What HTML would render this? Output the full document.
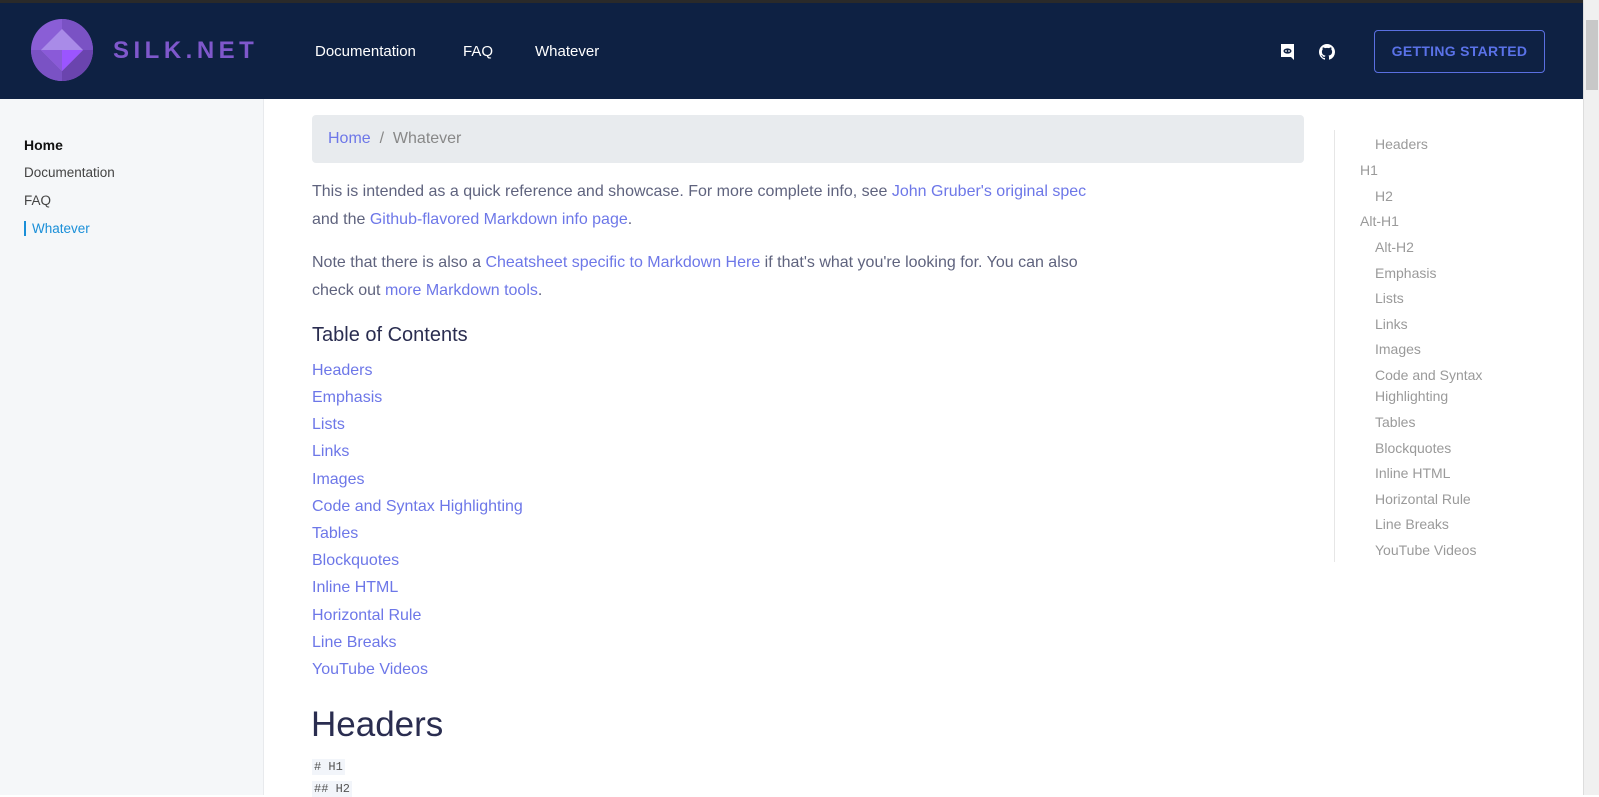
<!DOCTYPE html>
<html><head><style>
*{box-sizing:border-box;margin:0;padding:0}
body{width:1599px;height:795px;overflow:hidden;font-family:"Liberation Sans",sans-serif;background:#fff;position:relative;color:#4a4a68}
.top{position:absolute;left:0;top:0;width:1599px;height:3px;background:#2a2a2a}
.hdr{position:absolute;left:0;top:3px;width:1583px;height:96px;background:#0e2143}
.sb{position:absolute;right:0;top:0;width:16px;height:795px;background:#f0f0f0;border-left:1px solid #ddd}
.sb .th{position:absolute;left:2px;top:20px;width:12px;height:70px;background:#c8c8c8}
.a{position:absolute;white-space:nowrap}
.nav{color:#fff;font-size:15px;top:43px}
.btn{position:absolute;left:1374px;top:30px;width:171px;height:43px;border:1px solid #5a6fe0;border-radius:4px;color:#5a72e8;font-size:14px;font-weight:bold;text-align:center;line-height:41px;letter-spacing:.3px}
.side{position:absolute;left:0;top:99px;width:264px;height:696px;background:#f5f7f9;border-right:1px solid #e8eaed}
.side div{position:absolute;left:24px;font-size:13.5px;color:#444}
.bc{position:absolute;left:312px;top:115px;width:992px;height:48px;background:#e8ebee;border-radius:4px;font-size:16px;line-height:48px;padding-left:16px;color:#888}
.p{left:312px;font-size:16px;color:#5f637e}
a{color:#6d77e8;text-decoration:none}
.toc{left:312px;font-size:16px;color:#6d77e8}
.r{font-size:14px;color:#9a9a9a}
.code{position:absolute;left:312px;font-family:"Liberation Mono",monospace;font-size:12px;background:#f2f5fa;color:#555;padding:1px 2px}
</style></head><body>
<div class="top"></div>
<div class="hdr"></div>
<svg class="a" style="left:31px;top:19px" width="62" height="62" viewBox="0 0 62 62">
<circle cx="31" cy="31" r="31" fill="#8a5ed6"/>
<path d="M31 0A31 31 0 0 1 62 31H31Z" fill="#7a52c4"/>
<path d="M31 62A31 31 0 0 1 0 31H31Z" fill="#7a52c4"/>
<path d="M62 31A31 31 0 0 1 31 62V31Z" fill="#6a44ae"/>
<path d="M31 10L52 31L31 52L10 31Z" fill="#a98be8"/>
<path d="M31 31H52L31 52Z" fill="#9b55ff"/>
<path d="M31 31H10L31 52Z" fill="#8a5ad8"/>
</svg>
<div class="a" style="left:113px;top:37px;font-size:24px;font-weight:bold;color:#7f58cc;letter-spacing:4.5px">SILK.NET</div>
<div class="a nav" style="left:315px">Documentation</div>
<div class="a nav" style="left:463px">FAQ</div>
<div class="a nav" style="left:535px">Whatever</div>
<svg class="a" style="left:1280px;top:44px" width="15" height="16" viewBox="0 0 15 16"><path d="M1 0H14V16L11 13H1Z" fill="#fff"/><ellipse cx="7.5" cy="7" rx="4" ry="2.6" fill="#0e2143"/><circle cx="6" cy="7" r=".9" fill="#fff"/><circle cx="9" cy="7" r=".9" fill="#fff"/></svg>
<svg class="a" style="left:1319px;top:44px" width="16" height="16" viewBox="0 0 16 16"><path fill="#fff" d="M8 0C3.58 0 0 3.58 0 8c0 3.540 2.29 6.53 5.47 7.59.4.07.55-.17.55-.38v-1.33c-2.230.48-2.7-1.07-2.7-1.07-.36-.92-.89-1.17-.89-1.17-.73-.5.05-.49.05-.49.8.06 1.23.83 1.23.83.72 1.23 1.88.87 2.34.67.07-.52.28-.87.51-1.070-1.78-.2-3.65-.89-3.65-3.950 0-.87.31-1.59.82-2.15-.08-.2-.36-1.02.08-2.120 0 0 .67-.21 2.2.82a7.6 7.6 0 0 1 4 0c1.53-1.04 2.2-.82 2.2-.82.44 1.1.16 1.92.08 2.12.51.56.82 1.27.82 2.15 0 3.07-1.87 3.75-3.65 3.95.29.25.54.73.54 1.48v2.2c0 .21.15.46.55.38A8 8 0 0 0 16 8c0-4.42-3.58-8-8-8z"/></svg>
<div class="btn">GETTING STARTED</div>
<div class="side">
<div style="top:38px;font-weight:bold;color:#111;font-size:14px">Home</div>
<div style="top:66px">Documentation</div>
<div style="top:94px">FAQ</div>
<div style="top:122px;color:#1a8fd8;border-left:2px solid #1a8fd8;padding-left:6px;left:24px">Whatever</div>
</div>
<div class="bc"><a>Home</a>&nbsp; / &nbsp;Whatever</div>
<div class="a p" style="top:183px">This is intended as a quick reference and showcase. For more complete info, see <a>John Gruber's original spec</a></div>
<div class="a p" style="top:211px">and the <a>Github-flavored Markdown info page</a>.</div>
<div class="a p" style="top:254px">Note that there is also a <a>Cheatsheet specific to Markdown Here</a> if that's what you're looking for. You can also</div>
<div class="a p" style="top:282px">check out <a>more Markdown tools</a>.</div>
<div class="a" style="left:312px;top:324px;font-size:20px;color:#2a2d50">Table of Contents</div>
<div class="a toc" style="top:362px">Headers</div>
<div class="a toc" style="top:389px">Emphasis</div>
<div class="a toc" style="top:416px">Lists</div>
<div class="a toc" style="top:443px">Links</div>
<div class="a toc" style="top:471px">Images</div>
<div class="a toc" style="top:498px">Code and Syntax Highlighting</div>
<div class="a toc" style="top:525px">Tables</div>
<div class="a toc" style="top:552px">Blockquotes</div>
<div class="a toc" style="top:579px">Inline HTML</div>
<div class="a toc" style="top:607px">Horizontal Rule</div>
<div class="a toc" style="top:634px">Line Breaks</div>
<div class="a toc" style="top:661px">YouTube Videos</div>
<div class="a" style="left:311px;top:705px;font-size:35px;color:#2a2d50">Headers</div>
<div class="code" style="top:759px"># H1</div>
<div class="code" style="top:781px">## H2</div>
<div class="a" style="left:1334px;top:130px;width:1px;height:432px;background:#e6e6e6"></div>
<div class="a r" style="left:1375px;top:136px">Headers</div>
<div class="a r" style="left:1360px;top:162px">H1</div>
<div class="a r" style="left:1375px;top:188px">H2</div>
<div class="a r" style="left:1360px;top:213px">Alt-H1</div>
<div class="a r" style="left:1375px;top:239px">Alt-H2</div>
<div class="a r" style="left:1375px;top:265px">Emphasis</div>
<div class="a r" style="left:1375px;top:290px">Lists</div>
<div class="a r" style="left:1375px;top:316px">Links</div>
<div class="a r" style="left:1375px;top:341px">Images</div>
<div class="a r" style="left:1375px;top:367px">Code and Syntax</div>
<div class="a r" style="left:1375px;top:388px">Highlighting</div>
<div class="a r" style="left:1375px;top:414px">Tables</div>
<div class="a r" style="left:1375px;top:440px">Blockquotes</div>
<div class="a r" style="left:1375px;top:465px">Inline HTML</div>
<div class="a r" style="left:1375px;top:491px">Horizontal Rule</div>
<div class="a r" style="left:1375px;top:516px">Line Breaks</div>
<div class="a r" style="left:1375px;top:542px">YouTube Videos</div>
<div class="sb"><div class="th"></div></div>
</body></html>
